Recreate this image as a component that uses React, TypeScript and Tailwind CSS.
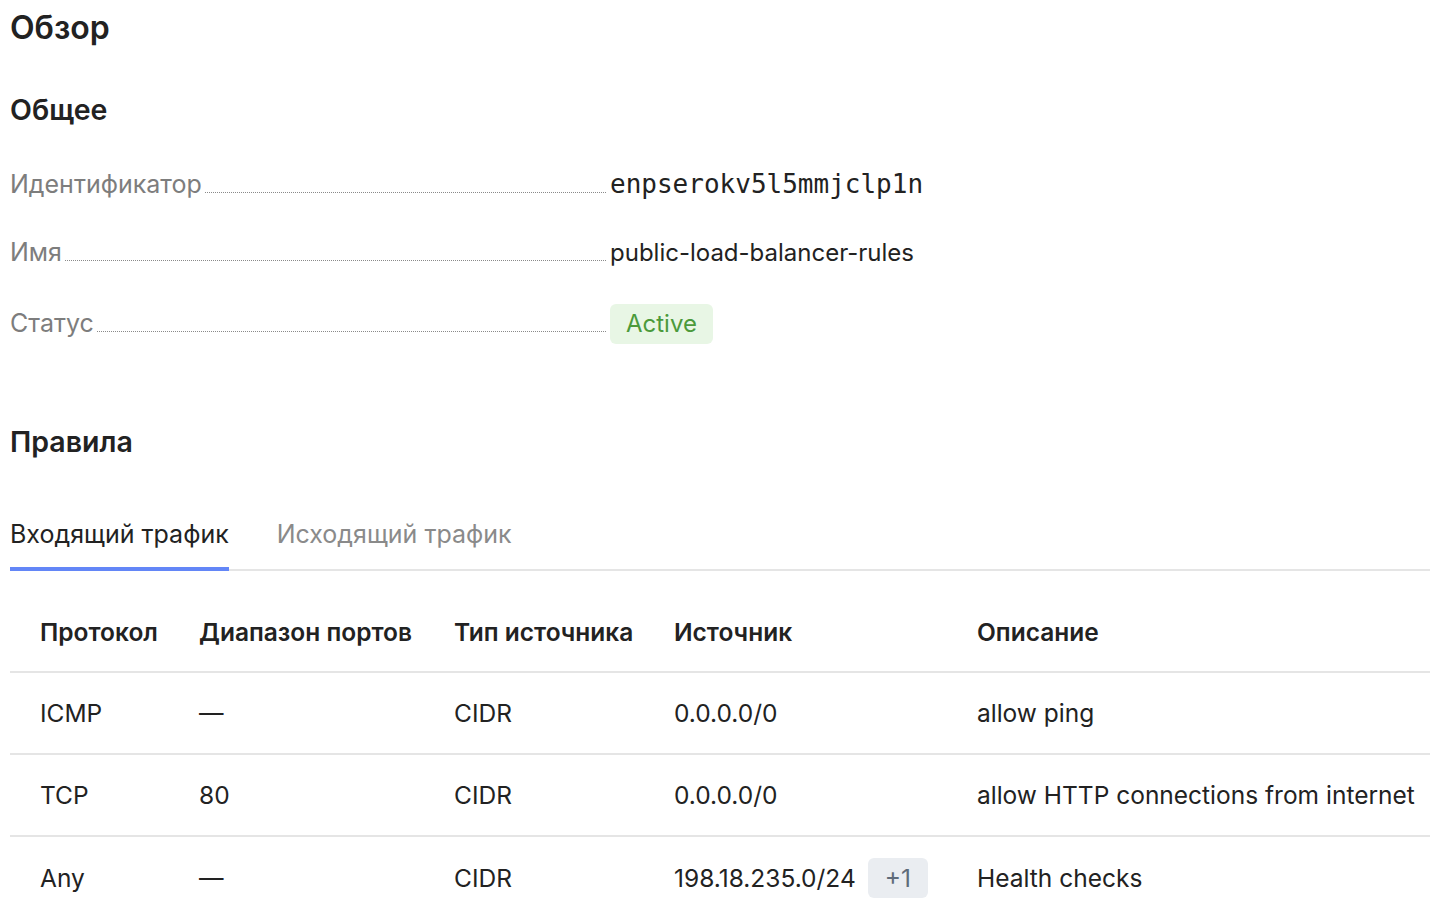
const rows = [
  { proto: 'ICMP', ports: '—', type: 'CIDR', source: '0.0.0.0/0', extra: 0, desc: 'allow ping' },
  { proto: 'TCP', ports: '80', type: 'CIDR', source: '0.0.0.0/0', extra: 0, desc: 'allow HTTP connections from internet' },
  { proto: 'Any', ports: '—', type: 'CIDR', source: '198.18.235.0/24', extra: 1, desc: 'Health checks' },
];

const Field = ({ label, children }: { label: string; children: React.ReactNode }) => (
  <div className="flex items-baseline h-[68px]">
    <div className="flex items-baseline w-[600px] shrink-0">
      <span className="text-[#7d7d7d] text-[25px]">{label}</span>
      <div className="flex-1 ml-[3px] mr-[4px] border-b border-dotted border-[#8a8a8a]" />
    </div>
    <div>{children}</div>
  </div>
);

export default function App() {
  return (
    <div className="min-h-screen bg-white pl-[10px] text-[24px] leading-[32px] text-[#222] font-['Inter',sans-serif]">
      <h1 className="pt-[8px] text-[32px] font-semibold leading-[40px]">Обзор</h1>

      <h2 className="mt-[44px] text-[28.5px] font-semibold leading-[36px]">Общее</h2>

      <div className="mt-[40px] flex flex-col">
        <Field label="Идентификатор">
          <span className="font-['DejaVu_Sans_Mono',monospace] text-[26px]">enpserokv5l5mmjclp1n</span>
        </Field>
        <Field label="Имя">
          <span>public-load-balancer-rules</span>
        </Field>
        <Field label="Статус">
          <span className="inline-flex items-center h-[40px] px-[16px] rounded-[6px] bg-[#e8f6e5] text-[#4b9a3b]">Active</span>
        </Field>
      </div>

      <h2 className="mt-[52px] text-[28.5px] font-semibold leading-[36px]">Правила</h2>

      <div className="mt-[58px] flex border-b-2 border-[#e5e5e5] text-[25px]">
        <div className="pb-[17px] -mb-[2px] border-b-4 border-[#6386f7]">Входящий трафик</div>
        <div className="ml-[48px] pb-[17px] text-[#8a8a8a]">Исходящий трафик</div>
      </div>

      <div className="grid grid-cols-[189px_255px_220px_303px_1fr]">
        <div className="contents font-semibold text-[24.5px]">
          <div className="pl-[30px] h-[102px] flex items-center border-b-2 border-[#e5e5e5] pt-[21px]">Протокол</div>
          <div className="h-[102px] flex items-center border-b-2 border-[#e5e5e5] pt-[21px]">Диапазон портов</div>
          <div className="h-[102px] flex items-center border-b-2 border-[#e5e5e5] pt-[21px]">Тип источника</div>
          <div className="h-[102px] flex items-center border-b-2 border-[#e5e5e5] pt-[21px]">Источник</div>
          <div className="h-[102px] flex items-center border-b-2 border-[#e5e5e5] pt-[21px]">Описание</div>
        </div>
        {rows.map((r, i) => {
          const cell = `h-[82px] flex items-center text-[24.5px] ${i < rows.length - 1 ? 'border-b-2 border-[#e5e5e5]' : ''}`;
          return (
            <div key={i} className="contents">
              <div className={`pl-[30px] ${cell}`}>{r.proto}</div>
              <div className={cell}>{r.ports}</div>
              <div className={cell}>{r.type}</div>
              <div className={cell}>
                {r.source}
                {r.extra > 0 && (
                  <span className="ml-[12px] inline-flex items-center h-[40px] px-[17px] rounded-[6px] bg-[#eaedf1] text-[#5f6b7a]">+{r.extra}</span>
                )}
              </div>
              <div className={`${cell} whitespace-nowrap`}>{r.desc}</div>
            </div>
          );
        })}
      </div>
    </div>
  );
}
